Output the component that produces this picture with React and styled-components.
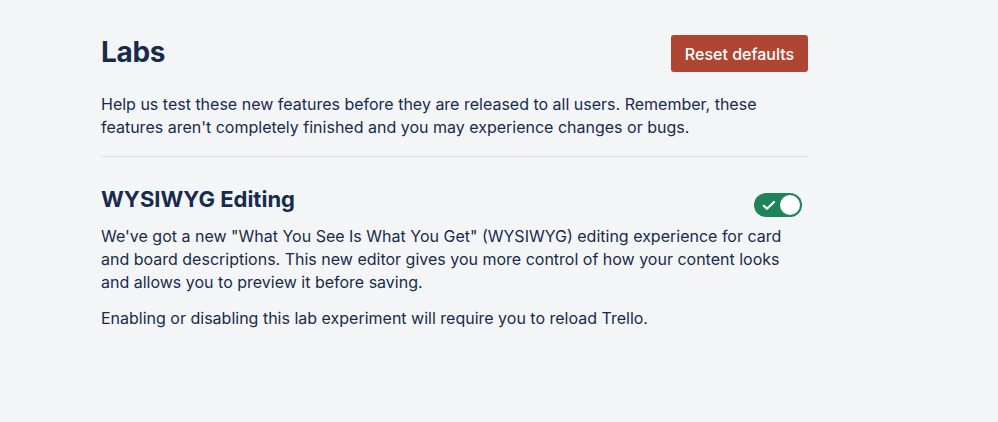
import React from "react";
import styled, { createGlobalStyle } from "styled-components";

const Global = createGlobalStyle`
  html, body { margin: 0; padding: 0; background: #f4f5f7; }
  body { font-family: Inter, "Noto Sans", sans-serif; color: #172b4d; -webkit-font-smoothing: antialiased; }
`;

const Page = styled.main`
  width: 707px;
  padding: 30px 0 60px 101px;
`;

const Header = styled.header`
  display: flex;
  justify-content: space-between;
  align-items: flex-start;
`;

const Title = styled.h1`
  margin: 0;
  padding-top: 4px;
  font-size: 28px;
  line-height: 36px;
  font-weight: 700;
  letter-spacing: -0.3px;
  color: #172b4d;
`;

const ResetButton = styled.button`
  margin-top: 5px;
  height: 37px;
  width: 137px;
  border: none;
  border-radius: 3px;
  background: #b04632;
  color: #ffffff;
  font-family: Inter, "Noto Sans", sans-serif;
  font-size: 16px;
  font-weight: 500;
  cursor: pointer;
`;

const Text = styled.p`
  margin: ${(p) => p.$mt || 0}px 0 0;
  font-size: 16px;
  line-height: 23px;
  color: #172b4d;
`;

const Divider = styled.hr`
  margin: 17px 0 0;
  border: none;
  border-top: 1px solid #dcdfe4;
`;

const Feature = styled.section`
  margin-top: 28px;
`;

const FeatureHead = styled.div`
  display: flex;
  justify-content: space-between;
  align-items: flex-start;
`;

const FeatureTitle = styled.h2`
  margin: 0;
  font-size: 22px;
  line-height: 28px;
  font-weight: 700;
  color: #172b4d;
`;

const Toggle = styled.button`
  margin: 8px 6px 0 0;
  width: 48px;
  height: 24px;
  border: none;
  border-radius: 12px;
  background: #1f845a;
  padding: 2px;
  display: flex;
  align-items: center;
  justify-content: space-between;
  cursor: pointer;
`;

const Check = styled.span`
  display: flex;
  width: 20px;
  justify-content: center;
  padding-left: 3px;
`;

const Knob = styled.span`
  width: 20px;
  height: 20px;
  border-radius: 50%;
  background: #ffffff;
`;

export default function App() {
  return (
    <>
      <Global />
      <Page>
        <Header>
          <Title>Labs</Title>
          <ResetButton>Reset defaults</ResetButton>
        </Header>
        <Text $mt={21}>
          Help us test these new features before they are released to all users. Remember, these
          features aren't completely finished and you may experience changes or bugs.
        </Text>
        <Divider />
        <Feature>
          <FeatureHead>
            <FeatureTitle>WYSIWYG Editing</FeatureTitle>
            <Toggle aria-label="WYSIWYG Editing" aria-pressed="true">
              <Check>
                <svg width="14" height="11" viewBox="0 0 14 11" fill="none">
                  <path d="M1.8 5.8 L5 8.8 L12 2" stroke="#fff" strokeWidth="2.2" strokeLinecap="round" strokeLinejoin="round" />
                </svg>
              </Check>
              <Knob />
            </Toggle>
          </FeatureHead>
          <Text $mt={8}>
            We've got a new "What You See Is What You Get" (WYSIWYG) editing experience for card
            and board descriptions. This new editor gives you more control of how your content looks
            and allows you to preview it before saving.
          </Text>
          <Text $mt={13}>Enabling or disabling this lab experiment will require you to reload Trello.</Text>
        </Feature>
      </Page>
    </>
  );
}
